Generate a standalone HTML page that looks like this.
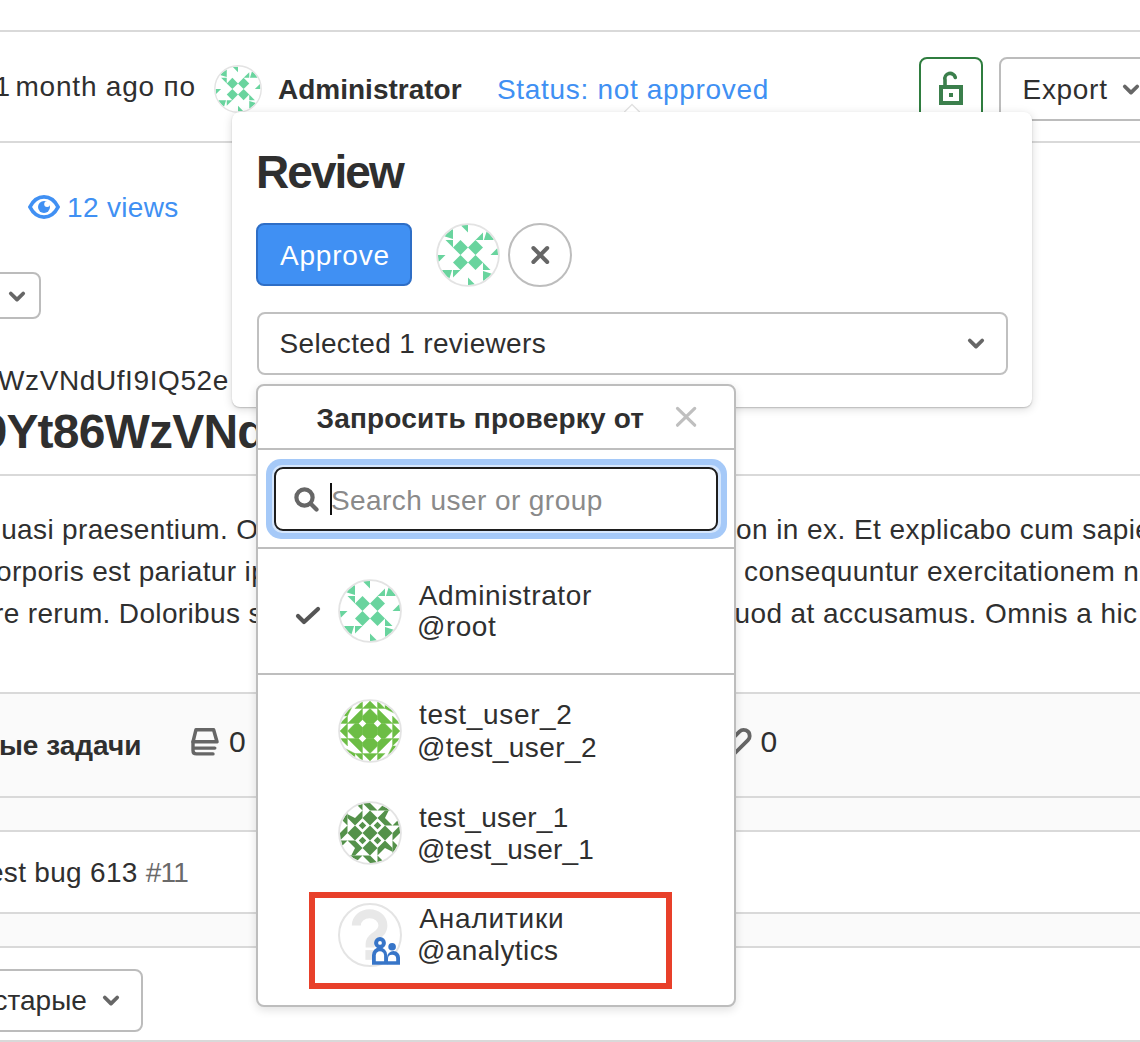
<!DOCTYPE html>
<html><head><meta charset="utf-8">
<style>
*{box-sizing:border-box;margin:0;padding:0}
html,body{width:1140px;height:1042px;overflow:hidden;background:#fff}
body{position:relative;font-family:"Liberation Sans",sans-serif;font-size:28px;color:#2f2f2f;line-height:32px}
.a{position:absolute}
.t{position:absolute;white-space:nowrap;line-height:32px}
.b{font-weight:bold}
.hr{position:absolute;left:0;width:1140px;height:2px;background:#d9d9d9}
.band{position:absolute;left:0;width:1140px;background:#fafafa}
.blue{color:#4090f3}
.av{position:absolute;border-radius:50%;overflow:hidden}
</style></head><body>

<!-- ===== background page ===== -->
<div class="hr" style="top:30px"></div>
<div class="t" style="left:-5.5px;top:71px;letter-spacing:0.8px"><span style="margin-right:-4px">1</span> month ago по</div>
<svg class="a" style="left:214px;top:65px" width="48" height="48"><use href="#idAdmin"/></svg>
<div class="t b" style="left:278px;top:74px">Administrator</div>
<div class="t blue" style="left:497px;top:74px;letter-spacing:0.68px">Status: not approved</div>

<!-- lock button -->
<div class="a" style="left:919px;top:57px;width:64px;height:64px;border:2px solid #2f7d3f;border-radius:8px"></div>
<svg class="a" style="left:936px;top:70px" width="30" height="38" viewBox="0 0 30 38">
  <path d="M9 15 V10 A5 5 0 0 1 19.33 7.5" fill="none" stroke="#3b7f4c" stroke-width="3.6" stroke-linecap="round"/>
  <path d="M3 15 H27 V35 H3 Z M7 19 V31 H23 V19 Z" fill="#3b7f4c" fill-rule="evenodd"/>
  <rect x="13" y="23" width="4" height="4" fill="#3b7f4c"/>
</svg>
<!-- export button -->
<div class="a" style="left:999px;top:57px;width:200px;height:64px;border:2px solid #bcbcbc;border-radius:8px"></div>
<div class="t" style="left:1022.5px;top:74px;letter-spacing:0.7px">Export</div>
<svg class="a" style="left:1121px;top:83px" width="20" height="14" viewBox="0 0 20 14"><path d="M3.8 3.5 L10 9.6 L16.2 3.5" fill="none" stroke="#666" stroke-width="3.8" stroke-linecap="round" stroke-linejoin="round"/></svg>

<div class="hr" style="top:141px"></div>

<!-- views -->
<svg class="a" style="left:24px;top:190px" width="40" height="34" viewBox="0 0 40 34">
  <path d="M5.9 17 C9.5 10 14 6.9 20 6.9 C26 6.9 30.5 10 34.1 17 C30.5 24 26 27.1 20 27.1 C14 27.1 9.5 24 5.9 17 Z" fill="none" stroke="#4090f3" stroke-width="3.8" stroke-linejoin="round"/>
  <circle cx="20" cy="17" r="6" fill="#4090f3"/>
  <circle cx="23.1" cy="14.1" r="2.9" fill="#fff"/>
</svg>
<div class="t blue" style="left:67px;top:192px;letter-spacing:0.34px">12 views</div>

<!-- left dropdown btn partial -->
<div class="a" style="left:-40px;top:271.5px;width:81px;height:47px;border:2px solid #bcbcbc;border-radius:8px"></div>
<svg class="a" style="left:7px;top:289.5px" width="20" height="14" viewBox="0 0 20 14"><path d="M3.8 3.5 L10 9.6 L16.2 3.5" fill="none" stroke="#666" stroke-width="3.8" stroke-linecap="round" stroke-linejoin="round"/></svg>

<div class="t" style="left:-2px;top:365px;letter-spacing:0.6px">WzVNdUfI9IQ52e</div>
<div class="t b" style="left:-19.5px;top:404px;font-size:48px;line-height:56px;letter-spacing:-0.8px">9Yt86WzVNdUfI</div>

<div class="hr" style="top:474px"></div>

<div class="t" style="left:1.2px;top:508.5px;line-height:42px;letter-spacing:0.35px">uasi praesentium. Odit</div>
<div class="t" style="left:-4px;top:550.5px;line-height:42px;letter-spacing:0.35px">orporis est pariatur ipsa</div>
<div class="t" style="left:-6px;top:592.5px;line-height:42px;letter-spacing:0.35px">re rerum. Doloribus sint</div>
<div class="t" style="left:736px;top:508.5px;line-height:42px;letter-spacing:0.43px">on in ex. Et explicabo cum sapiente</div>
<div class="t" style="left:744px;top:550.5px;line-height:42px;letter-spacing:0.43px">consequuntur exercitationem nam</div>
<div class="t" style="left:734.4px;top:592.5px;line-height:42px;letter-spacing:0.43px">uod at accusamus. Omnis a hic</div>

<!-- band -->
<div class="hr" style="top:692px"></div>
<div class="band" style="top:694px;height:102px"></div>
<div class="hr" style="top:796px"></div>
<div class="t b" style="left:-18px;top:730px">ные задачи</div>
<svg class="a" style="left:185px;top:720px" width="40" height="40" viewBox="0 0 40 40">
  <path d="M11 9.7 H28.6 L32 21.8 H8 Z" fill="none" stroke="#666" stroke-width="3.5" stroke-linejoin="round"/>
  <path d="M8 21.8 V30.4 Q8 33.9 11.5 33.9 H28 M8 28.1 H29.8" fill="none" stroke="#666" stroke-width="3.4" stroke-linecap="round"/>
</svg>
<div class="t" style="left:229px;top:725.5px;font-size:30px">0</div>
<svg class="a" style="left:728px;top:720px" width="30" height="40" viewBox="0 0 30 40">
  <path d="M4 19.1 L11.46 11.66 A6 6 0 0 1 21.7 15.9 A6 6 0 0 1 19.94 20.14 L4 36" fill="none" stroke="#666" stroke-width="3.8"/>
</svg>
<div class="t" style="left:760.4px;top:725.5px;font-size:30px">0</div>

<div class="band" style="top:798px;height:32px"></div>
<div class="hr" style="top:830px"></div>
<div class="t" style="left:-12px;top:856.5px;letter-spacing:0.3px">est bug 613 <span style="color:#6a6a6a;letter-spacing:-0.8px">#11</span></div>
<div class="hr" style="top:912px"></div>
<div class="band" style="top:914px;height:32px"></div>
<div class="hr" style="top:946px"></div>

<div class="a" style="left:-60px;top:968.5px;width:203px;height:63px;border:2px solid #bcbcbc;border-radius:8px"></div>
<div class="t" style="left:-6.5px;top:985px">старые</div>
<svg class="a" style="left:101px;top:994px" width="20" height="14" viewBox="0 0 20 14"><path d="M3.8 3.5 L10 9.6 L16.2 3.5" fill="none" stroke="#666" stroke-width="3.8" stroke-linecap="round" stroke-linejoin="round"/></svg>
<div class="hr" style="top:1039.5px"></div>

<!-- POPOVER -->
<div class="a" style="left:232px;top:112px;width:800px;height:295px;background:#fff;border-radius:8px;box-shadow:0 1px 1.5px rgba(0,0,0,.2),0 2px 10px rgba(0,0,0,.15)"></div>
<svg class="a" style="left:624px;top:103px" width="16" height="10" viewBox="0 0 16 10"><path d="M0 9.5 L8 1.5 L16 9.5 Z" fill="#fff" stroke="rgba(0,0,0,.12)" stroke-width="1.3"/><rect x="0" y="9" width="16" height="1" fill="#fff"/></svg>
<div class="t b" style="left:256px;top:146px;font-size:46px;line-height:52px;letter-spacing:-1.95px">Review</div>
<div class="a" style="left:256px;top:223px;width:156px;height:63px;background:#4090f3;border:2px solid #2e6ec6;border-radius:8px"></div>
<div class="t" style="left:280px;top:239.5px;color:#fff;letter-spacing:0.8px">Approve</div>
<svg class="a" style="left:436px;top:223px" width="64" height="64"><use href="#idAdmin"/></svg>
<div class="a" style="left:508px;top:223px;width:64px;height:64px;border:2px solid #bdbdbd;border-radius:50%"></div>
<svg class="a" style="left:528px;top:243px" width="24" height="24" viewBox="0 0 24 24"><path d="M5.4 5 L19.2 19 M19.2 5 L5.4 19" stroke="#666" stroke-width="4" stroke-linecap="round"/></svg>
<div class="a" style="left:257px;top:311.5px;width:751px;height:63px;border:2px solid #c0c0c0;border-radius:8px"></div>
<div class="t" style="left:279.5px;top:327.5px;letter-spacing:0.33px">Selected 1 reviewers</div>
<svg class="a" style="left:966px;top:337px" width="20" height="14" viewBox="0 0 20 14"><path d="M3.8 3.5 L10 9.6 L16.2 3.5" fill="none" stroke="#666" stroke-width="3.8" stroke-linecap="round" stroke-linejoin="round"/></svg>

<!-- DROPDOWN -->
<div class="a" style="left:256px;top:383.5px;width:480px;height:623.5px;background:#fff;border:2px solid #bdbdbd;border-radius:8px;box-shadow:0 3px 10px rgba(0,0,0,.12)"></div>
<div class="t b" style="left:316.4px;top:402.5px;letter-spacing:0.21px">Запросить проверку от</div>
<svg class="a" style="left:672px;top:403px" width="28" height="28" viewBox="0 0 28 28"><path d="M5.5 5.4 L22.7 22.2 M22.7 5.4 L5.5 22.2" stroke="#bfbfbf" stroke-width="3.2" stroke-linecap="round"/></svg>
<div class="a" style="left:258px;top:448px;width:476px;height:2px;background:#bebebe"></div>
<div class="a" style="left:266px;top:459px;width:461px;height:80px;border-radius:15px;background:#a5c9f8"></div>
<div class="a" style="left:272px;top:465px;width:449px;height:68px;border-radius:10px;background:#d6e7fd"></div>
<div class="a" style="left:274px;top:467px;width:444px;height:64px;border-radius:9px;background:#fff;border:2.5px solid #1e1e1e"></div>
<svg class="a" style="left:291px;top:483.5px" width="32" height="32" viewBox="0 0 32 32"><circle cx="13.5" cy="13.5" r="8.1" fill="none" stroke="#666" stroke-width="4.2"/><path d="M19.5 19.5 L25.5 25.5" stroke="#666" stroke-width="4.2" stroke-linecap="round"/></svg>
<div class="a" style="left:330px;top:483px;width:2px;height:32px;background:#111"></div>
<div class="t" style="left:331px;top:485px;color:#8a8a8a;letter-spacing:0.43px">Search user or group</div>
<div class="a" style="left:258px;top:547px;width:476px;height:2px;background:#bebebe"></div>

<svg class="a" style="left:294px;top:604.5px" width="28" height="22" viewBox="0 0 28 22"><path d="M4 11 L10 17 L24 4" fill="none" stroke="#555" stroke-width="4.2" stroke-linecap="round" stroke-linejoin="round"/></svg>
<svg class="a" style="left:338px;top:579px" width="64" height="64"><use href="#idAdmin"/></svg>
<div class="t" style="left:418.8px;top:579.6px;letter-spacing:0.63px">Administrator</div>
<div class="t" style="left:417px;top:611.4px;letter-spacing:0.5px">@root</div>
<div class="a" style="left:258px;top:673px;width:476px;height:2px;background:#bebebe"></div>

<svg class="a" style="left:338px;top:699px" width="64" height="64"><use href="#idU2"/></svg>
<div class="t" style="left:419px;top:699.2px;letter-spacing:0.66px">test_user_2</div>
<div class="t" style="left:417px;top:731.7px;letter-spacing:0.45px">@test_user_2</div>

<svg class="a" style="left:338px;top:801px" width="64" height="64"><use href="#idU1"/></svg>
<div class="t" style="left:419px;top:801.5px;letter-spacing:0.3px">test_user_1</div>
<div class="t" style="left:417px;top:833.8px;letter-spacing:0.2px">@test_user_1</div>

<div class="a" style="left:338px;top:903px;width:64px;height:64px;border:2px solid #e4e4e4;border-radius:50%"></div>
<svg class="a" style="left:338px;top:903px" width="64" height="64" viewBox="0 0 64 64">
 <path d="M18.3 22.5 A13.3 11.8 0 0 1 44.9 22.5 C44.9 28.5 40.5 31 37 33.5 C33.5 36 32.1 37.5 32.1 41 V44.4" fill="none" stroke="#e8e8e8" stroke-width="9"/>
 <rect x="27.4" y="47.1" width="9.4" height="9.7" fill="#e8e8e8"/>
</svg>
<svg class="a" style="left:370px;top:935px" width="32" height="32" viewBox="0 0 32 32">
 <circle cx="10" cy="7.9" r="3.9" fill="none" stroke="#3775c8" stroke-width="4"/>
 <circle cx="22.1" cy="11.7" r="3.8" fill="#3775c8"/>
 <path d="M2 29.7 V20 A7.6 7.6 0 0 1 17.2 20 V29.7 Z" fill="#3775c8"/>
 <path d="M17 29.7 V22.6 A6.5 6.5 0 0 1 30 22.6 V29.7 Z" fill="#3775c8"/>
 <path d="M5.8 26.2 V20.5 A4.15 4.15 0 0 1 14.1 20.5 V26.2 Z" fill="#fff"/>
 <path d="M18 26.2 V23.8 A4.1 4.1 0 0 1 26.2 23.8 V26.2 Z" fill="#fff"/>
</svg>
<div class="t" style="left:419.3px;top:903.3px;letter-spacing:0.8px">Аналитики</div>
<div class="t" style="left:417px;top:935px;letter-spacing:0.41px">@analytics</div>
<div class="a" style="left:309px;top:892px;width:363px;height:97px;border:6px solid #e8402a"></div>


<svg width="0" height="0" style="position:absolute">
<defs>
<clipPath id="cc"><circle cx="0" cy="0" r="4.02"/></clipPath>
<symbol id="idAdmin" viewBox="-4.27 -4.27 8.54 8.54">
 <g clip-path="url(#cc)" fill="#69d49e">
  <g id="admQ"><polygon points="-1,-2 0,-1 -1,0 -2,-1"/><polygon points="-1,-4 0,-4 0,-3"/><polygon points="-2,-4.5 -2,-2.13 -4.5,-2.9"/><polygon points="-3,-2 -2,-2 -2,-1"/></g>
  <use href="#admQ" transform="rotate(90)"/><use href="#admQ" transform="rotate(180)"/><use href="#admQ" transform="rotate(270)"/>
 </g>
 <circle r="4.13" fill="none" stroke="#e3e3e3" stroke-width="0.24"/>
</symbol>
<symbol id="idU2" viewBox="-4.27 -4.27 8.54 8.54">
 <g clip-path="url(#cc)" fill="#6cbd45" stroke="#6cbd45" stroke-width="0.05">
  <g id="u2Q"><polygon points="-1,-3 0,-4 1,-3"/><polygon points="-2,-3 -1,-4 -1,-3"/><polygon points="1,-4 1,-3 2,-3"/><polygon points="2,-3 4,-2 2,-4"/><polygon points="-1,-3 -1,-1 -3,-1"/><polygon points="0,-3 1,-2 1,-1 -1,-1 -1,-2"/></g>
  <use href="#u2Q" transform="rotate(90)"/><use href="#u2Q" transform="rotate(180)"/><use href="#u2Q" transform="rotate(270)"/>
  <rect x="-1.02" y="-1.02" width="2.04" height="2.04"/>
  <g fill="#fff" stroke="none"><polygon points="-1,-1.5 -0.5,-1 -1,-0.5 -1.5,-1"/><polygon points="1,-1.5 1.5,-1 1,-0.5 0.5,-1"/><polygon points="-1,1.5 -0.5,1 -1,0.5 -1.5,1"/><polygon points="1,1.5 1.5,1 1,0.5 0.5,1"/></g>
 </g>
 <circle r="4.13" fill="none" stroke="#e3e3e3" stroke-width="0.24"/>
</symbol>
<symbol id="idU1" viewBox="-4.27 -4.27 8.54 8.54">
 <g clip-path="url(#cc)" fill="#54914a">
  <g id="u1Q"><polygon points="0,-3 1,-2 0,-1 -1,-2"/><polygon points="1,-2 2,-3 2.5,-3 2,-2 3,-1 2,-1"/><polygon points="1,-3 2,-4 3,-3"/><polygon points="-1,-4 0,-4 1,-3 0,-3"/><polygon points="-1,-3 -2,-4 -1,-5"/><polygon points="1,-1.5 1.5,-1 1,-0.5 0.5,-1"/></g>
  <use href="#u1Q" transform="rotate(90)"/><use href="#u1Q" transform="rotate(180)"/><use href="#u1Q" transform="rotate(270)"/>
  <polygon points="0,-1 1,0 0,1 -1,0"/>
 </g>
 <circle r="4.13" fill="none" stroke="#e3e3e3" stroke-width="0.24"/>
</symbol>
</defs>
</svg>
</body></html>
